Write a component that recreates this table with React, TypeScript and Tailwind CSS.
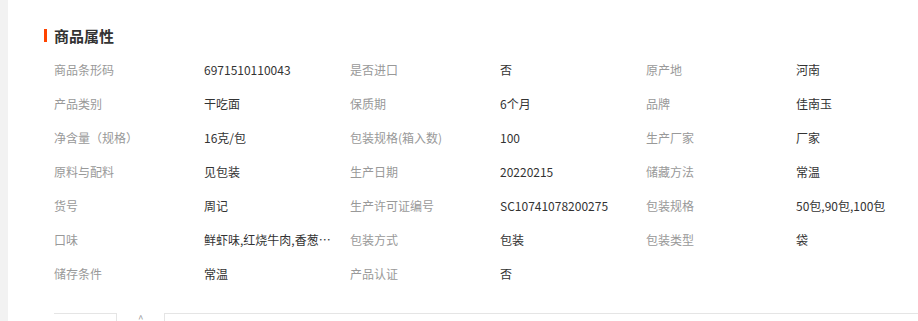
const rows: [string, string][][] = [
  [["商品条形码", "6971510110043"], ["是否进口", "否"], ["原产地", "河南"]],
  [["产品类别", "干吃面"], ["保质期", "6个月"], ["品牌", "佳南玉"]],
  [["净含量（规格）", "16克/包"], ["包装规格(箱入数)", "100"], ["生产厂家", "厂家"]],
  [["原料与配料", "见包装"], ["生产日期", "20220215"], ["储藏方法", "常温"]],
  [["货号", "周记"], ["生产许可证编号", "SC10741078200275"], ["包装规格", "50包,90包,100包"]],
  [["口味", "鲜虾味,红烧牛肉,香葱鸡蛋"], ["包装方式", "包装"], ["包装类型", "袋"]],
  [["储存条件", "常温"], ["产品认证", "否"]],
];

export default function App() {
  return (
    <div
      className="flex h-[321px] w-[918px] overflow-hidden bg-white text-[12px]"
      style={{ fontFamily: '"Microsoft YaHei", "Noto Sans CJK SC", sans-serif' }}
    >
      <div className="w-[8px] shrink-0 bg-[#f2f2f2]" />
      <div className="flex flex-1 flex-col pl-[36px]">
        <div className="mt-[28px] flex h-[17px] items-center">
          <span className="h-[13px] w-[3px] bg-[#ff4400]" />
          <h2 className="ml-[7px] text-[15px] font-bold leading-none text-[#333]">商品属性</h2>
        </div>
        <div className="mt-[10px] flex flex-col pl-[10px]">
          {rows.map((row, i) => (
            <div key={i} className="flex h-[34px] items-center">
              {row.map(([k, v]) => (
                <div key={k} className="flex w-[296px] items-center">
                  <span className="w-[150px] shrink-0 text-[#999]">{k}</span>
                  <span className="w-[130px] truncate text-[#333]">{v}</span>
                </div>
              ))}
            </div>
          ))}
        </div>
        <div className="mt-[22px] flex items-start pl-[10px]">
          <div className="h-[10px] w-[63px] border-r border-t border-[#e5e5e5]" />
          <span className="ml-[21px] mt-[1px] text-[10px] leading-none text-[#999]">^</span>
          <div className="ml-[20px] h-[10px] flex-1 border-l border-t border-[#e5e5e5]" />
        </div>
      </div>
    </div>
  );
}
